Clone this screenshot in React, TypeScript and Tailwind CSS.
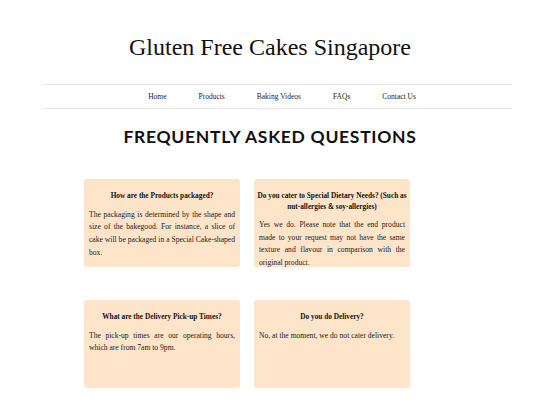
import React from "react";

const faqs = [
  {
    q: "How are the Products packaged?",
    a: "The packaging is determined by the shape and size of the bakegood. For instance, a slice of cake will be packaged in a Special Cake-shaped box.",
  },
  {
    q: "Do you cater to Special Dietary Needs? (Such as nut-allergies & soy-allergies)",
    a: "Yes we do. Please note that the end product made to your request may not have the same texture and flavour in comparison with the original product.",
  },
  {
    q: "What are the Delivery Pick-up Times?",
    a: "The pick-up times are our operating hours, which are from 7am to 9pm.",
  },
  {
    q: "Do you do Delivery?",
    a: "No, at the moment, we do not cater delivery.",
  },
];

export default function App() {
  return (
    <div className="w-[540px] h-[405px] bg-white overflow-hidden text-[#111]" style={{ fontFamily: '"Liberation Serif", serif' }}>
      <header className="pt-[30px] h-[84px] text-center">
        <h1 className="text-[24px] leading-[34px] text-[#111]">Gluten Free Cakes Singapore</h1>
      </header>
      <nav className="ml-[44px] w-[468px] h-[25px] border-y border-[#e6e6e6] flex items-center justify-center gap-[32px] pl-[8px] text-[7.5px] text-[#222]">
        <span>Home</span>
        <span>Products</span>
        <span>Baking Videos</span>
        <span>FAQs</span>
        <span>Contact Us</span>
      </nav>
      <h2
        className="mt-[16px] text-center text-[17.5px] leading-[24px] font-bold tracking-[0.04em] text-[#111]"
        style={{ fontFamily: 'Lato, sans-serif' }}
      >
        FREQUENTLY ASKED QUESTIONS
      </h2>
      <div className="mt-[30px] ml-[84px] grid grid-cols-[156px_156px] gap-x-[14px] gap-y-[33px]">
        {faqs.map((f) => (
          <div key={f.q} className="h-[88px] bg-[#fee4c8] rounded-[3px] px-[5px] pt-[12px]">
            <div className="-mx-[3px] text-center font-bold text-[7.3px] leading-[10.5px]">{f.q}</div>
            <p className="mt-[7px] text-[7.6px] leading-[12.7px] text-justify text-[#222]">{f.a}</p>
          </div>
        ))}
      </div>
    </div>
  );
}
